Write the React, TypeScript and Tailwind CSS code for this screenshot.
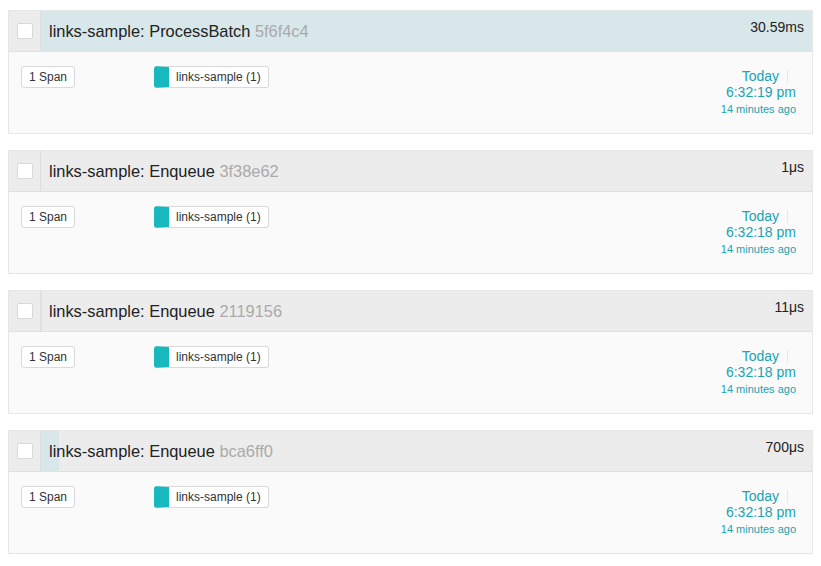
type Trace = {
  op: string;
  id: string;
  duration: string;
  durationUs: number;
  time: string;
};

const MAX_US = 30590;

const TRACES: Trace[] = [
  { op: 'ProcessBatch', id: '5f6f4c4', duration: '30.59ms', durationUs: 30590, time: '6:32:19 pm' },
  { op: 'Enqueue', id: '3f38e62', duration: '1μs', durationUs: 1, time: '6:32:18 pm' },
  { op: 'Enqueue', id: '2119156', duration: '11μs', durationUs: 11, time: '6:32:18 pm' },
  { op: 'Enqueue', id: 'bca6ff0', duration: '700μs', durationUs: 700, time: '6:32:18 pm' },
];

function ResultItem({ trace }: { trace: Trace }) {
  const pct = (trace.durationUs / MAX_US) * 100;
  return (
    <div className="mb-4 border border-[#e6e6e6]">
      {/* Header */}
      <div className="flex h-[41px] border-b border-[#e0e0e0] bg-[#ececec]">
        <div className="flex w-[32px] shrink-0 items-center justify-center border-r border-[#dedede]">
          <span className="block h-4 w-4 rounded-[2px] border border-[#d9d9d9] bg-white" />
        </div>
        <div className="relative flex flex-1 items-center">
          <div className="absolute inset-y-0 left-0 bg-[#d8e7ea]" style={{ width: `${pct}%` }} />
          <span className="relative pl-2 text-[16.4px] text-[#222]">
            links-sample: {trace.op} <span className="text-[#aaa]">{trace.id}</span>
          </span>
          <span className="relative ml-auto self-start pr-2 pt-[6px] text-[14px] leading-5 text-[#222]">
            {trace.duration}
          </span>
        </div>
      </div>

      {/* Body */}
      <div className="flex bg-[#fafafa] pb-4 pl-3 pr-4 pt-3">
        <div className="w-[133px] shrink-0">
          <span className="inline-block rounded-[3px] border border-[#d9d9d9] bg-white px-[7px] text-[12px] leading-5 text-[#333]">
            1 Span
          </span>
        </div>
        <div className="flex-1">
          <span className="inline-block rounded-[3px] border border-[#d9d9d9] border-l-[15px] border-l-[#17b8be] bg-white px-[7px] text-[12px] leading-5 text-[#333]">
            links-sample (1)
          </span>
        </div>
        <div className="pt-1 text-right text-[#1ba3b3]">
          <div className="flex items-center justify-end text-[14px] leading-4">
            Today
            <span className="ml-2 mr-[8px] inline-block h-[13px] w-px bg-[#e8e8e8]" />
          </div>
          <div className="text-[14px] leading-4">{trace.time}</div>
          <div className="pt-px text-[11px] leading-4">14 minutes ago</div>
        </div>
      </div>
    </div>
  );
}

export default function App() {
  return (
    <div
      className="min-h-screen bg-white px-2 pt-[10px]"
      style={{ fontFamily: '"Liberation Sans", Arial, sans-serif' }}
    >
      {TRACES.map((t) => (
        <ResultItem key={t.id} trace={t} />
      ))}
    </div>
  );
}
